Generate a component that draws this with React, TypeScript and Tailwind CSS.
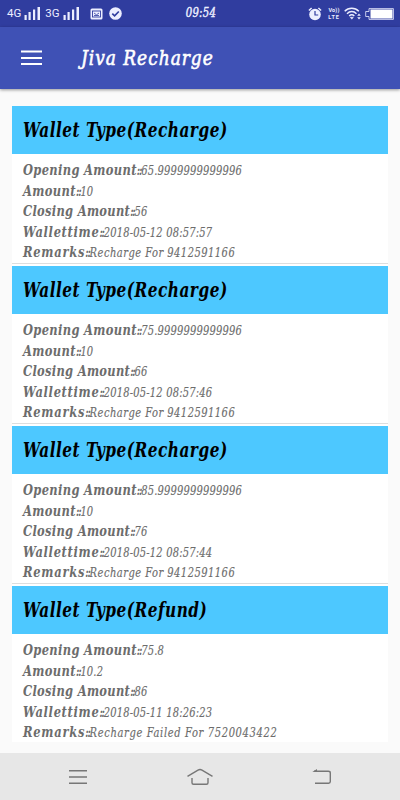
import clsx from "clsx";

interface Transaction {
  type: string;
  opening: string;
  amount: string;
  closing: string;
  time: string;
  remarks: string;
}

const transactions: Transaction[] = [
  {
    type: "Recharge",
    opening: "65.9999999999996",
    amount: "10",
    closing: "56",
    time: "2018-05-12 08:57:57",
    remarks: "Recharge For 9412591166",
  },
  {
    type: "Recharge",
    opening: "75.9999999999996",
    amount: "10",
    closing: "66",
    time: "2018-05-12 08:57:46",
    remarks: "Recharge For 9412591166",
  },
  {
    type: "Recharge",
    opening: "85.9999999999996",
    amount: "10",
    closing: "76",
    time: "2018-05-12 08:57:44",
    remarks: "Recharge For 9412591166",
  },
  {
    type: "Refund",
    opening: "75.8",
    amount: "10.2",
    closing: "86",
    time: "2018-05-11 18:26:23",
    remarks: "Recharge Failed For 7520043422",
  },
];

function Signal({ network }: { network: string }) {
  return (
    <div className="flex items-center gap-[3px]">
      <span className="font-['Roboto',sans-serif] text-[11.5px] not-italic leading-none">{network}</span>
      <svg width="17" height="13" viewBox="0 0 17 13" fill="currentColor">
        <rect x="0.5" y="8" width="2.2" height="5" />
        <rect x="4.5" y="5" width="2.2" height="8" />
        <rect x="9" y="2.5" width="2.2" height="10.5" />
        <rect x="13.5" y="0" width="2.5" height="13" />
      </svg>
    </div>
  );
}

function StatusBar() {
  return (
    <div className="flex h-[27px] items-center justify-between bg-[#303d9f] pl-[7px] pr-[6px] text-[#eceeff]">
      <div className="flex w-[140px] items-center">
        <Signal network="4G" />
        <div className="ml-[4px]">
          <Signal network="3G" />
        </div>
        <svg className="ml-[10px] shrink-0" width="13" height="12" viewBox="0 0 13 12">
          <rect x="0.5" y="0.5" width="12" height="11" rx="1.5" fill="currentColor" />
          <rect x="2.5" y="3" width="8" height="6" fill="none" stroke="#303d9f" strokeWidth="0.9" />
          <path d="M4 5l2.5 1.8L9 5M4 7.5h5" fill="none" stroke="#303d9f" strokeWidth="0.8" />
        </svg>
        <svg className="ml-[6px] shrink-0" width="13" height="13" viewBox="0 0 13 13">
          <circle cx="6.5" cy="6.5" r="6.3" fill="currentColor" />
          <path d="M3.3 6.7l2.3 2.2 4.2-4.4" fill="none" stroke="#303d9f" strokeWidth="1.7" />
        </svg>
      </div>
      <span className="inline-block scale-x-[0.9] text-[12.5px] tracking-[0.3px] [-webkit-text-stroke:0.4px]">
        09:54
      </span>
      <div className="flex w-[140px] items-center justify-end">
        <svg width="14" height="14" viewBox="0 0 14 14">
          <circle cx="7" cy="7.5" r="5.8" fill="currentColor" />
          <path d="M0.9 3.5L3.6 1M13.1 3.5L10.4 1" stroke="currentColor" strokeWidth="1.5" />
          <path d="M7 4v4h3.2" fill="none" stroke="#303d9f" strokeWidth="1.2" />
        </svg>
        <div className="ml-[5px] flex w-[14px] flex-col items-center font-['Roboto',sans-serif] text-[5.5px] font-bold not-italic leading-[6.5px] tracking-[0.2px]">
          <span>Vo))</span>
          <span className="tracking-[0.9px]">LTE</span>
        </div>
        <svg className="ml-[3px]" width="18" height="13" viewBox="0 0 18 13" fill="none" stroke="currentColor">
          <path d="M0.7 4.2C4.5 0.2 11 0.2 14.8 4.2M3 6.7C5.8 3.8 9.8 3.8 12.5 6.7M5.2 9C6.8 7.4 8.8 7.4 10.3 9" strokeWidth="1.4" />
          <path d="M6.3 10.3L7.8 12.2L9.3 10.3Z" fill="currentColor" strokeWidth="0.6" />
          <path d="M13.2 8.8L15 6.5L16.8 8.8ZM13.2 10.2L15 12.4L16.8 10.2Z" fill="currentColor" stroke="none" />
        </svg>
        <svg className="ml-[3px]" width="29" height="12" viewBox="0 0 29 12">
          <path d="M4 0.6h24.4v10.8H4V8.5H0.7v-5H4z" fill="none" stroke="currentColor" strokeWidth="0.8" />
          <rect x="5.5" y="1.5" width="22" height="9" fill="#fff" />
        </svg>
      </div>
    </div>
  );
}

interface FieldProps {
  label: string;
  value: string;
  labelClass?: string;
  valueClass?: string;
}

function Field({
  label,
  value,
  labelClass = "tracking-[0.45px]",
  valueClass = "tracking-[0.2px]",
}: FieldProps) {
  return (
    <div className="h-[20.6px] origin-left scale-x-[0.85] whitespace-nowrap leading-[20.6px]">
      <span className={clsx("text-[15px] font-bold", labelClass)}>{label}</span>
      <span className="text-[12px] font-bold tracking-[-1.4px]">::</span>
      <span className={clsx("text-[13px] [-webkit-text-stroke:0.15px]", valueClass)}>{value}</span>
    </div>
  );
}

function TransactionCard({ item, last }: { item: Transaction; last: boolean }) {
  return (
    <div className={clsx("bg-white", last ? "h-[156px]" : "h-40")}>
      <div className="flex h-12 items-center bg-[#4dc8ff] pl-[11px]">
        <h2 className="origin-left scale-x-[0.85] whitespace-nowrap text-[20px] font-bold tracking-[0.6px] text-black">
          Wallet Type({item.type})
        </h2>
      </div>
      <div
        className={clsx(
          "h-[110px] pl-[11px] pt-[6px] text-[#6c6c6c]",
          !last && "border-b border-[#dedede]"
        )}
      >
        <Field label="Opening Amount" value={item.opening} labelClass="tracking-[0.4px]" />
        <Field label="Amount" value={item.amount} />
        <Field label="Closing Amount" value={item.closing} labelClass="tracking-[0.35px]" />
        <Field label="Wallettime" value={item.time} labelClass="tracking-[0.8px]" />
        <Field
          label="Remarks"
          value={item.remarks}
          labelClass="tracking-[0.9px]"
          valueClass={item.type === "Refund" ? "tracking-[0.75px]" : "tracking-[0.55px]"}
        />
      </div>
    </div>
  );
}

export default function App() {
  return (
    <div className="flex h-[800px] w-[400px] flex-col overflow-hidden bg-[#fafafa] font-['DejaVu_Serif_Condensed','DejaVu_Serif',serif] italic">
      <StatusBar />
      <header className="flex h-[62px] shrink-0 items-center bg-[#3f51b5] pl-[21px] text-white shadow-[0_1px_3px_rgba(0,0,0,0.4)]">
        <svg width="21" height="16" viewBox="0 0 21 16" fill="currentColor">
          <path d="M0 0.5h21v2H0zM0 7h21v2H0zM0 13h21v2H0z" />
        </svg>
        <h1 className="ml-[39px] mt-[2px] origin-left scale-x-[0.9] whitespace-nowrap text-[21px] tracking-[1.1px] [-webkit-text-stroke:0.6px]">
          Jiva Recharge
        </h1>
      </header>
      <main className="flex-1 px-3 pt-[17px]">
        {transactions.map((item, i) => (
          <TransactionCard key={item.time} item={item} last={i === transactions.length - 1} />
        ))}
      </main>
      <nav className="flex h-[47px] shrink-0 items-center justify-between bg-[#e7e7e7] pl-[69px] pr-[68px] text-[#777]">
        <svg width="18" height="16" viewBox="0 0 18 16" stroke="currentColor" strokeWidth="1.4">
          <path d="M0 1.8h18M0 8h18M0 14.2h18" />
        </svg>
        <svg width="26" height="18" viewBox="0 0 26 18" fill="none" stroke="currentColor" strokeWidth="1.4">
          <path d="M0.5 8.3L11 2.1Q13 1 15 2.1L25.5 8.3M5 10v4.8Q5 16.3 6.5 16.3h13Q21 16.3 21 14.8V10" />
        </svg>
        <svg width="20" height="16" viewBox="0 0 20 16" fill="none" stroke="currentColor" strokeWidth="1.4">
          <path d="M2 2.3h14.3Q18.3 2.3 18.3 4v8.5Q18.3 14.2 16.6 14.2H3" />
          <path d="M0.3 2.9L5 0V2.9Z" fill="currentColor" stroke="none" />
        </svg>
      </nav>
    </div>
  );
}
